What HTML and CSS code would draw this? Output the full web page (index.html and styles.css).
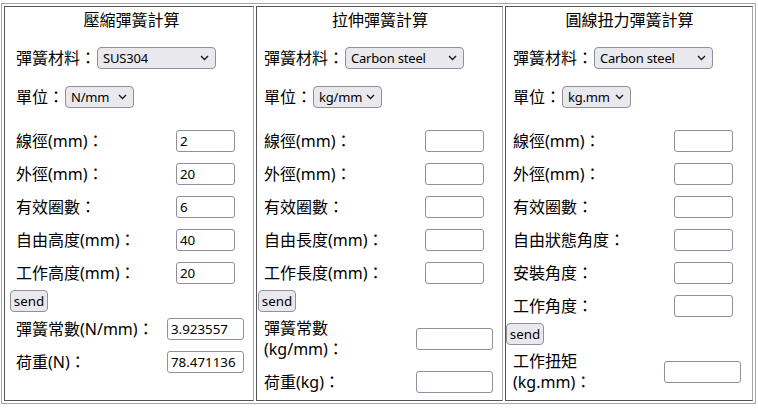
FILE: index.html
```html
<!DOCTYPE html>
<html lang="zh-Hant">
<head>
<meta charset="utf-8">
<title>彈簧計算</title>
<link rel="stylesheet" href="styles.css">
</head>
<body>
<div class="sheet">
  <section class="panel panel-1">
    <h2 class="title">壓縮彈簧計算</h2>
    <div class="pick pick-mat">
      <label>彈簧材料：</label>
      <span class="sel sel-mat"><select><option>SUS304</option></select><svg class="chev" viewBox="0 0 9 6"><path d="M1 1 L4.5 4.5 L8 1"/></svg></span>
    </div>
    <div class="pick pick-unit">
      <label>單位：</label>
      <span class="sel sel-unit"><select><option>N/mm</option></select><svg class="chev" viewBox="0 0 9 6"><path d="M1 1 L4.5 4.5 L8 1"/></svg></span>
    </div>
    <div class="fields">
      <div class="row"><label>線徑(mm)：</label><input value="2"></div>
      <div class="row"><label>外徑(mm)：</label><input value="20"></div>
      <div class="row"><label>有效圈數：</label><input value="6"></div>
      <div class="row"><label>自由高度(mm)：</label><input value="40"></div>
      <div class="row"><label>工作高度(mm)：</label><input value="20"></div>
    </div>
    <button class="send">send</button>
    <div class="results">
      <div class="row"><label>彈簧常數(N/mm)：</label><input value="3.923557"></div>
      <div class="row"><label>荷重(N)：</label><input value="78.471136"></div>
    </div>
  </section>

  <section class="panel panel-2">
    <h2 class="title">拉伸彈簧計算</h2>
    <div class="pick pick-mat">
      <label>彈簧材料：</label>
      <span class="sel sel-mat"><select><option>Carbon steel</option></select><svg class="chev" viewBox="0 0 9 6"><path d="M1 1 L4.5 4.5 L8 1"/></svg></span>
    </div>
    <div class="pick pick-unit">
      <label>單位：</label>
      <span class="sel sel-unit"><select><option>kg/mm</option></select><svg class="chev" viewBox="0 0 9 6"><path d="M1 1 L4.5 4.5 L8 1"/></svg></span>
    </div>
    <div class="fields">
      <div class="row"><label>線徑(mm)：</label><input></div>
      <div class="row"><label>外徑(mm)：</label><input></div>
      <div class="row"><label>有效圈數：</label><input></div>
      <div class="row"><label>自由長度(mm)：</label><input></div>
      <div class="row"><label>工作長度(mm)：</label><input></div>
    </div>
    <button class="send">send</button>
    <div class="results">
      <div class="row"><label>彈簧常數<br>(kg/mm)：</label><input></div>
      <div class="row"><label>荷重(kg)：</label><input></div>
    </div>
  </section>

  <section class="panel panel-3">
    <h2 class="title">圓線扭力彈簧計算</h2>
    <div class="pick pick-mat">
      <label>彈簧材料：</label>
      <span class="sel sel-mat"><select><option>Carbon steel</option></select><svg class="chev" viewBox="0 0 9 6"><path d="M1 1 L4.5 4.5 L8 1"/></svg></span>
    </div>
    <div class="pick pick-unit">
      <label>單位：</label>
      <span class="sel sel-unit"><select><option>kg.mm</option></select><svg class="chev" viewBox="0 0 9 6"><path d="M1 1 L4.5 4.5 L8 1"/></svg></span>
    </div>
    <div class="fields">
      <div class="row"><label>線徑(mm)：</label><input></div>
      <div class="row"><label>外徑(mm)：</label><input></div>
      <div class="row"><label>有效圈數：</label><input></div>
      <div class="row"><label>自由狀態角度：</label><input></div>
      <div class="row"><label>安裝角度：</label><input></div>
      <div class="row"><label>工作角度：</label><input></div>
    </div>
    <button class="send">send</button>
    <div class="results">
      <div class="row"><label>工作扭矩<br>(kg.mm)：</label><input></div>
    </div>
  </section>
</div>
</body>
</html>
```

FILE: styles.css
```css
html, body {
  background: #ffffff;
}
body {
  margin: 0;
  padding: 3px 0 0 1px;
  color: #000000;
  font-family: "Noto Sans", "Noto Sans CJK TC", sans-serif;
}
.sheet {
  display: grid;
  grid-template-columns: 250px 247px 248px;
  column-gap: 2px;
  padding: 2px;
  border: 1px solid #a6a6a6;
  width: max-content;
}
.panel {
  box-sizing: border-box;
  height: 395px;
  border: 1px solid #555555;
  border-right-color: #a6a6a6;
  padding-top: 1px;
  display: flex;
  flex-direction: column;
}
.panel-1 { padding-left: 5px; }
.panel-2 { padding-left: 1px; }
.panel-3 { padding-left: 1px; }

.title {
  margin: 1px 0 0;
  font-size: 16px;
  font-weight: normal;
  line-height: 22px;
  text-align: center;
}
.pick {
  display: flex;
  align-items: center;
  gap: 1px;
  margin-left: 6px;
  font-size: 16px;
  line-height: 22px;
}
.pick-mat { margin-top: 16px; }
.pick-unit { margin-top: 17px; }

.sel {
  position: relative;
  display: inline-flex;
}
.sel select {
  -webkit-appearance: none;
  appearance: none;
  box-sizing: border-box;
  height: 22px;
  margin: 0;
  border: 1px solid #8f8f9d;
  border-radius: 4px;
  background: #e9e9ed;
  color: #000000;
  font-family: "Noto Sans", sans-serif;
  font-size: 13px;
  letter-spacing: -0.2px;
  line-height: 20px;
  padding: 0 0 0 5px;
}
.sel-mat select { width: 119px; }
.sel-unit select { width: 69px; }
.chev {
  position: absolute;
  right: 7px;
  top: 8px;
  width: 9px;
  height: 6px;
  pointer-events: none;
  fill: none;
  stroke: #1a1a1a;
  stroke-width: 1.4;
}

.fields {
  margin-top: 22px;
  display: flex;
  flex-direction: column;
  gap: 11px;
}
.row {
  display: grid;
  grid-template-columns: 161px 59px;
  align-items: center;
  margin-left: 6px;
  font-size: 16px;
  line-height: 21px;
}
.panel-1 .fields .row { grid-template-columns: 160px 59px; }
.row input {
  box-sizing: border-box;
  width: 100%;
  height: 22px;
  margin: 0;
  border: 1px solid #8f8f9d;
  border-radius: 3px;
  padding: 0 3px;
  background: #ffffff;
  color: #000000;
  font-family: "Noto Sans", sans-serif;
  font-size: 13.33px;
}

.send {
  align-self: flex-start;
  margin-top: 6px;
  box-sizing: border-box;
  height: 22px;
  width: 38px;
  padding: 0;
  border: 1px solid #8f8f9d;
  border-radius: 4px;
  background: #e9e9ed;
  color: #000000;
  font-family: "Noto Sans", sans-serif;
  font-size: 13.33px;
  line-height: 20px;
}
.panel-3 .send { margin-left: -1px; }

.results {
  margin-top: 6px;
  display: flex;
  flex-direction: column;
  gap: 11px;
}
.results .row {
  grid-template-columns: 152px 77px;
}
.panel-1 .results .row { grid-template-columns: 151px 77px; }
.panel-3 .results .row { grid-template-columns: 151px 77px; }
```
